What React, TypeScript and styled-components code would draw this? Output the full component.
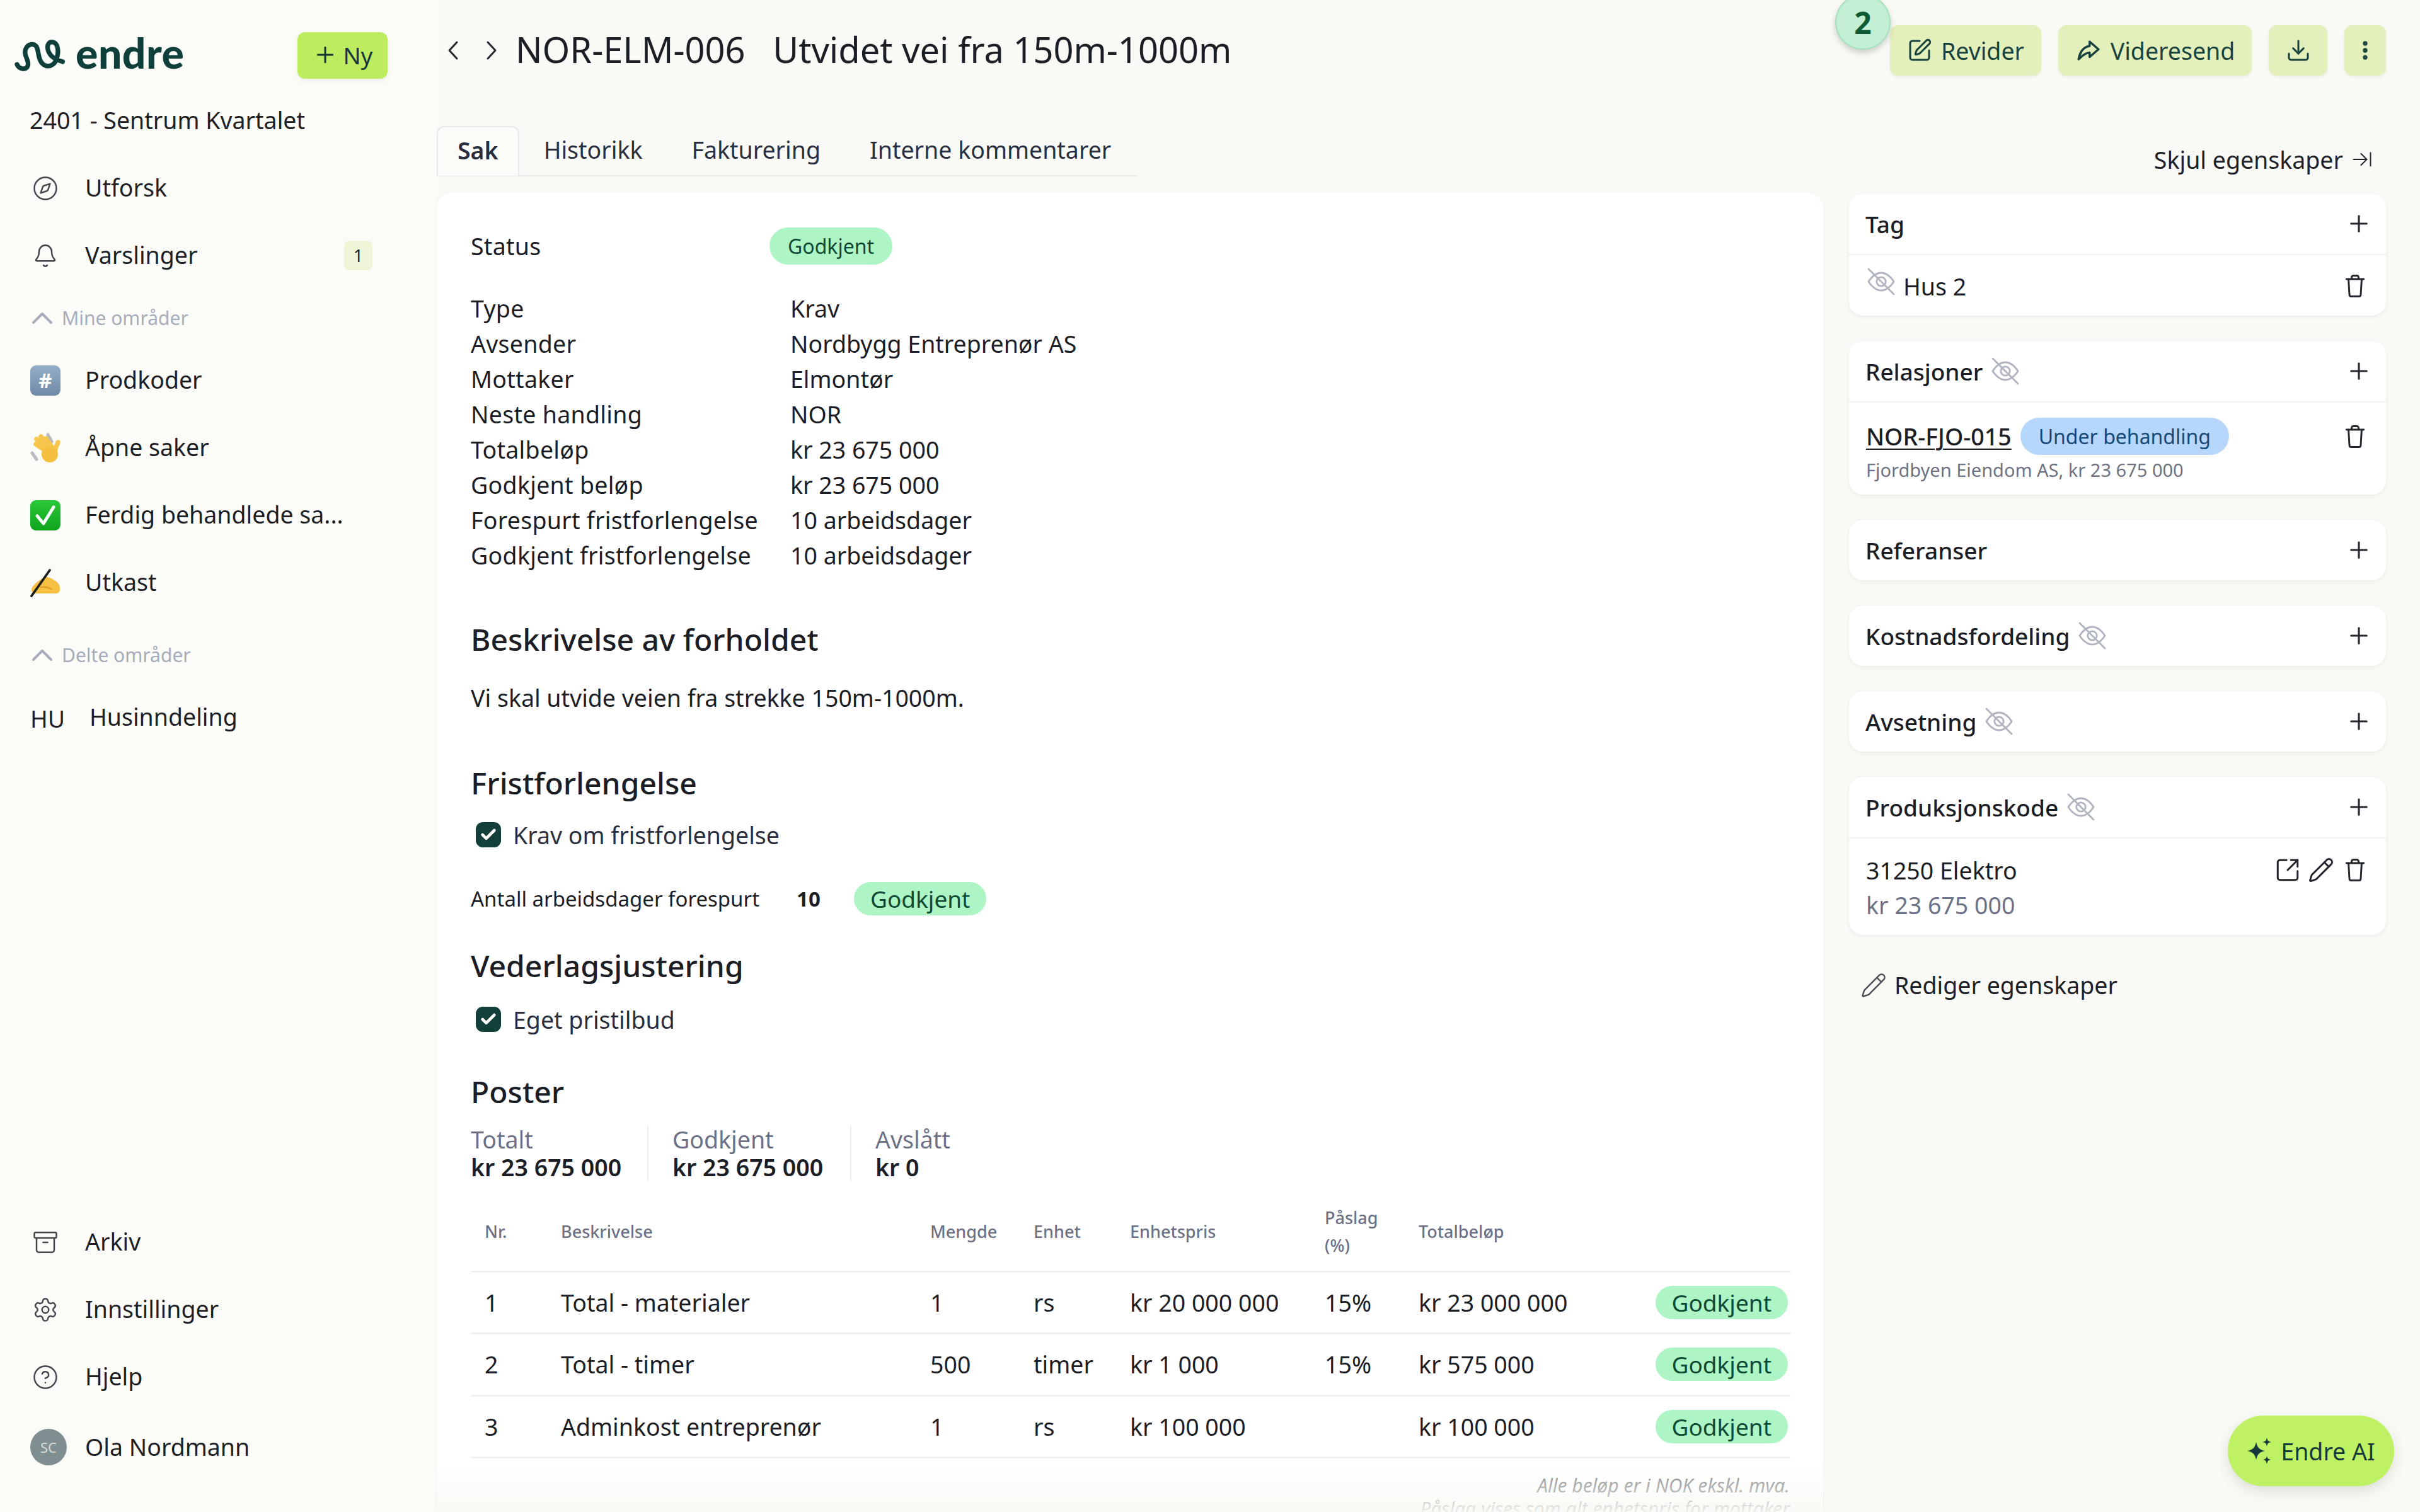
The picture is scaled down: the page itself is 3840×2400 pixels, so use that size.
import React from "react";
import styled, { createGlobalStyle } from "styled-components";
import {
  Compass, Bell, Plus, SquarePen, Download, EllipsisVertical, ArrowRightToLine,
  Archive, Settings, CircleHelp, SquareArrowOutUpRight, Pencil, Check,
} from "lucide-react";
import { TbShare3 } from "react-icons/tb";

const Global = createGlobalStyle`
  html, body { margin: 0; padding: 0; background: #f9faf5; }
  body { font-family: "Noto Sans", "Open Sans", sans-serif; color: #1c1e26; }
  * { box-sizing: border-box; }
`;

const Page = styled.div`
  position: relative;
  width: 3840px;
  height: 2400px;
  overflow: hidden;
  display: grid;
  grid-template-columns: 693px 1fr;
  background: #f9faf5;
  font-size: 37.5px;
`;

/* ---------- Sidebar ---------- */
const Sidebar = styled.aside`
  display: flex;
  flex-direction: column;
  padding: 51px 0 45px;
  background: #fbfcf8;
  height: 2400px;
`;
const BrandRow = styled.div`
  display: flex;
  align-items: center;
  justify-content: space-between;
  padding: 0 78px 0 22px;
  height: 74px;
`;
const Brand = styled.div`
  display: flex;
  align-items: center;
  gap: 14px;
  color: #0f3f3b;
`;
const BrandName = styled.span`
  font-family: "Lato", "Inter", sans-serif;
  font-weight: 900;
  font-size: 66px;
  line-height: 74px;
  letter-spacing: 0.5px;
  margin-top: -8px;
  color: #0f3f3b;
`;
const NewButton = styled.button`
  display: flex;
  align-items: center;
  justify-content: center;
  gap: 9px;
  width: 143px;
  height: 74px;
  padding-bottom: 3px;
  border: 0;
  border-radius: 12px;
  background: #bdec5f;
  color: #17383a;
  font: 400 37px "Noto Sans", sans-serif;
  box-shadow: 0 3px 6px rgba(40, 60, 30, 0.08);
`;
const Project = styled.div`
  margin: 28px 0 16px;
  height: 76px;
  line-height: 76px;
  padding-left: 47px;
  color: #1f2125;
`;
const NavRow = styled.div`
  display: flex;
  align-items: center;
  height: ${(p) => p.$h || 107}px;
  padding-left: 48px;
  padding-right: 102px;
  color: #1d1f25;
`;
const NavIcon = styled.span`
  display: flex;
  justify-content: center;
  align-items: center;
  width: 48px;
  height: 48px;
  margin-right: 39px;
  color: #43474c;
  flex: none;
`;
const NavLabel = styled.span`
  flex: 1;
  white-space: nowrap;
  overflow: hidden;
  text-overflow: ellipsis;
  padding-bottom: 2px;
`;
const Count = styled.span`
  display: flex;
  align-items: center;
  justify-content: center;
  width: 45px;
  height: 47px;
  border-radius: 8px;
  background: #eef5d6;
  font-size: 27px;
`;
const SectionLabel = styled.div`
  display: flex;
  align-items: center;
  gap: 14px;
  height: ${(p) => p.$h}px;
  padding: ${(p) => p.$top || 0}px 0 0 50px;
  font-size: 30px;
  color: #a7acba;
`;
const AreaCode = styled.span`
  width: 94px;
  flex: none;
  font-size: 37.5px;
  padding-top: 4px;
`;
const Spacer = styled.div`
  flex: 1;
`;
const Avatar = styled.span`
  display: flex;
  align-items: center;
  justify-content: center;
  width: 58px;
  height: 58px;
  border-radius: 50%;
  margin-right: 29px;
  background: #7f8e90;
  color: #d6dcdc;
  font-size: 22px;
  flex: none;
`;
const Keycap = styled.span`
  display: flex;
  align-items: center;
  justify-content: center;
  width: 48px;
  height: 48px;
  border-radius: 9px;
  background: linear-gradient(#94aec9, #6f8aa6);
  color: #fff;
  font-weight: 700;
  font-size: 33px;
  line-height: 1;
`;

/* ---------- Main ---------- */
const Main = styled.main`
  display: flex;
  flex-direction: column;
  padding-right: 54px;
  min-width: 0;
`;
const Header = styled.header`
  display: flex;
  align-items: center;
  justify-content: space-between;
  height: 80px;
  margin-top: 40px;
`;
const TitleGroup = styled.div`
  display: flex;
  align-items: center;
  padding-left: 16px;
`;
const NavArrow = styled.span`
  display: flex;
  width: ${(p) => p.$w}px;
  color: #26282e;
`;
const Title = styled.h1`
  margin: 0 0 4px;
  font-weight: 400;
  font-size: 56px;
  line-height: 76px;
  color: #1c1e26;
  white-space: pre;
`;
const Actions = styled.div`
  display: flex;
  gap: 27px;
`;
const ActionButton = styled.button`
  position: relative;
  display: flex;
  align-items: center;
  justify-content: center;
  gap: 14px;
  height: 80px;
  width: ${(p) => p.$w}px;
  border: 0;
  border-radius: 13px;
  background: #e4f0bb;
  color: #17423e;
  font: 400 37.5px "Noto Sans", sans-serif;
  box-shadow: 0 2px 5px rgba(40, 60, 30, 0.07);
`;
const StepBadge = styled.span`
  position: absolute;
  left: -87px;
  top: -49px;
  display: flex;
  align-items: center;
  justify-content: center;
  width: 88px;
  height: 88px;
  border-radius: 50%;
  border: 2px solid #a5e0bc;
  background: #c4efd5;
  color: #0d5a34;
  font-weight: 700;
  font-size: 48px;
  box-shadow: 0 5px 10px rgba(30, 60, 40, 0.22);
`;
const TabBar = styled.div`
  display: flex;
  justify-content: space-between;
  margin-top: 80px;
  height: 80px;
`;
const Tabs = styled.div`
  display: flex;
  width: 1112px;
  box-shadow: inset 0 -2px 0 #e4e6ea;
`;
const Tab = styled.div`
  display: flex;
  flex: none;
  align-items: center;
  white-space: nowrap;
  height: 79px;
  padding: 0 ${(p) => (p.$active ? 31 : 39)}px 4px;
  color: #2a2f3f;
  font-weight: ${(p) => (p.$active ? 600 : 400)};
  background: ${(p) => (p.$active ? "#fbfcf8" : "transparent")};
  border: ${(p) => (p.$active ? "2px solid #e6e8ea" : "0")};
  border-bottom: 0;
  border-radius: 12px 12px 0 0;
`;
const HideLink = styled.div`
  display: flex;
  align-items: center;
  gap: 12px;
  width: 852px;
  justify-content: flex-end;
  padding: 26px 20px 0 0;
  color: #1f2128;
`;
const Body = styled.div`
  display: flex;
  gap: 41px;
  margin-top: 26px;
  flex: 1;
  min-height: 0;
`;
const CaseCard = styled.section`
  position: relative;
  width: 2200px;
  height: 2200px;
  padding: 55px 53px 0 54px;
  background: #fff;
  border-radius: 24px 24px 0 0;
  box-shadow: 0 1px 5px rgba(30, 40, 20, 0.04);
`;
const BottomFade = styled.div`
  position: absolute;
  left: 0;
  right: 0;
  top: 2010px;
  height: 86px;
  background: linear-gradient(rgba(249, 250, 245, 0), rgba(249, 250, 245, 0.93));
`;
const StatusRow = styled.div`
  display: grid;
  grid-template-columns: 474px auto;
  align-items: center;
  justify-content: start;
  height: 59px;
`;
const StatusLabel = styled.span`
  letter-spacing: 0.28px;
  margin-top: -1px;
`;
const Pill = styled.span`
  display: inline-flex;
  align-items: center;
  justify-content: center;
  height: ${(p) => p.$h || 53}px;
  padding: 0 ${(p) => p.$px || 26}px;
  border-radius: 30px;
  background: ${(p) => p.$bg || "#aef5c6"};
  color: ${(p) => p.$fg || "#0f4a34"};
  font-size: ${(p) => p.$fs || 37}px;
  white-space: nowrap;
`;
const Info = styled.dl`
  display: grid;
  grid-template-columns: 507px 1fr;
  grid-auto-rows: 56px;
  margin: 41px 0 0;
  align-items: center;
`;
const Term = styled.dt`
  margin: 0;
  letter-spacing: 0.28px;
  white-space: nowrap;
`;
const Desc = styled.dd`
  margin: 0;
`;
const Heading = styled.h2`
  margin: ${(p) => p.$mt}px 0 0;
  font-size: 48px;
  line-height: 64px;
  font-weight: 500;
  color: #1c1e26;
`;
const Paragraph = styled.p`
  margin: 33px 0 0;
  line-height: 56px;
`;
const CheckRow = styled.div`
  display: flex;
  align-items: center;
  gap: 19px;
  margin: ${(p) => p.$mt}px 0 0 8px;
  height: 40px;
  color: #2a2f3f;
`;
const CheckBox = styled.span`
  display: flex;
  align-items: center;
  justify-content: center;
  width: 40px;
  height: 40px;
  border-radius: 11px;
  background: #123f3a;
  color: #fff;
`;
const DaysRow = styled.div`
  display: flex;
  align-items: center;
  margin-top: 55px;
  height: 53px;
  font-size: 33px;
`;
const DaysLabel = styled.span`
  width: 517px;
  white-space: nowrap;
`;
const DaysValue = styled.strong`
  width: 91px;
  font-weight: 700;
`;
const Stats = styled.div`
  display: flex;
  margin-top: 22px;
`;
const Stat = styled.div`
  width: ${(p) => p.$w}px;
  margin-right: 42px;
  padding-left: ${(p) => (p.$first ? 0 : 38)}px;
  border-left: ${(p) => (p.$first ? "0" : "2px solid #eceef0")};
  white-space: nowrap;
`;
const StatLabel = styled.div`
  line-height: 44px;
  color: #6c7186;
`;
const StatValue = styled.div`
  line-height: 44px;
  font-weight: 600;
`;
const Table = styled.table`
  width: 2094px;
  margin-top: 18px;
  border-collapse: collapse;
  table-layout: fixed;
`;
const Th = styled.th`
  height: 125px;
  padding: 0 0 0 22px;
  border-bottom: 3px solid #f0f1f1;
  text-align: left;
  font-size: 27px;
  line-height: 44px;
  font-weight: 500;
  color: #6c7186;
`;
const Td = styled.td`
  height: 98.5px;
  padding: 0 0 0 22px;
  border-bottom: 3px solid #f0f1f1;
  white-space: nowrap;
`;
const PillCell = styled(Td)`
  padding: 0 4px 0 0;
  text-align: right;
`;
const Notes = styled.div`
  margin-top: 24px;
  text-align: right;
  font-style: italic;
  font-size: 30px;
  line-height: 37px;
  color: #6f7278;
`;

/* ---------- Properties ---------- */
const Side = styled.aside`
  display: flex;
  flex-direction: column;
  gap: 40px;
  width: 852px;
  padding-top: 1px;
`;
const PropCard = styled.section`
  border-radius: 22px;
  background: #fff;
  box-shadow: 0 2px 6px rgba(30, 40, 20, 0.07);
`;
const PropHeader = styled.div`
  display: flex;
  align-items: center;
  gap: 12px;
  height: 96px;
  padding: 0 22px 0 26px;
  font-weight: 500;
  font-size: 37px;
`;
const PropBody = styled.div`
  border-top: 2px solid #f0f1f0;
  padding: 0 27px;
  height: ${(p) => p.$h}px;
`;
const PropLine = styled.div`
  display: flex;
  align-items: center;
  gap: ${(p) => p.$gap || 0}px;
  height: ${(p) => p.$h}px;
  padding-top: ${(p) => p.$top || 0}px;
`;
const Grow = styled.span`
  flex: 1;
`;
const PlusButton = styled.span`
  display: flex;
  margin-left: auto;
  color: #25282e;
`;
const PropLink = styled.span`
  text-decoration: underline;
  text-underline-offset: 5px;
  text-decoration-thickness: 2px;
  font-weight: 500;
`;
const SubText = styled.div`
  font-size: 29px;
  line-height: 40px;
  color: #6e7280;
  margin-top: 4px;
`;
const Amount = styled.div`
  line-height: 56px;
  color: #6c7186;
`;
const RowIcons = styled.span`
  display: flex;
  align-items: center;
  gap: 11px;
  color: #23262c;
  padding-right: 0;
`;
const EditLink = styled.div`
  display: flex;
  align-items: center;
  gap: 12px;
  margin-top: 14px;
  padding-left: 18px;
  color: #1f2128;
`;
const AiButton = styled.button`
  position: absolute;
  right: 41px;
  bottom: 41px;
  display: flex;
  align-items: center;
  justify-content: center;
  gap: 12px;
  width: 264px;
  height: 112px;
  border: 0;
  border-radius: 56px;
  background: #bef264;
  color: #15383a;
  font: 400 37.5px "Noto Sans", sans-serif;
  box-shadow: 0 8px 20px rgba(40, 60, 30, 0.14);
`;
const EyeWrap = styled.svg`
  color: #b0b4c0;
  flex: none;
`;
const HusEye = styled.span`
  display: flex;
  margin: -14px 11px 0 0;
`;

/* ---------- Drawings ---------- */
const Logo = () => (
  <svg width="84" height="56" viewBox="30 28 252 168" fill="none" stroke="currentColor" strokeWidth="22" strokeLinecap="round" strokeLinejoin="round">
    <path d="M45 155C55 178 90 185 97 160C104 135 75 112 85 85C95 55 130 50 140 75C150 100 145 145 180 160C205 170 230 150 236 120C244 90 240 50 212 48C185 48 185 85 205 110C220 130 245 135 262 142" />
  </svg>
);
const Eye = ({ size = 48 }: { size?: number }) => (
  <EyeWrap width={size} height={size} viewBox="0 0 24 24" fill="none" stroke="currentColor" strokeWidth="1.4">
    <path d="M2 12s4-7 10-7 10 7 10 7-4 7-10 7-10-7-10-7z" />
    <circle cx="12" cy="12" r="3.6" />
    <path d="M2 2l20 20" strokeLinecap="round" />
  </EyeWrap>
);
const Trash = () => (
  <svg width="44" height="46" viewBox="0 0 24 24" fill="none" stroke="currentColor" strokeWidth="1.6" strokeLinecap="round" strokeLinejoin="round">
    <path d="M4.5 6h15M9 6V4.5A1.5 1.5 0 0 1 10.5 3h3A1.5 1.5 0 0 1 15 4.5V6M6.3 6l.8 13.6A1.5 1.5 0 0 0 8.6 21h6.8a1.5 1.5 0 0 0 1.5-1.4L17.7 6" />
  </svg>
);
const ChevronTiny = () => (
  <svg width="34" height="22" viewBox="0 0 34 22" fill="none" stroke="#a7acba" strokeWidth="4" strokeLinecap="round" strokeLinejoin="round">
    <path d="M3 18L17 4l14 14" />
  </svg>
);
const ArrowLeft = () => (
  <svg width="20" height="32" viewBox="0 0 20 32" fill="none" stroke="currentColor" strokeWidth="3" strokeLinecap="round" strokeLinejoin="round">
    <path d="M16 3L4 16l12 13" />
  </svg>
);
const ArrowRight = () => (
  <svg width="20" height="32" viewBox="0 0 20 32" fill="none" stroke="currentColor" strokeWidth="3" strokeLinecap="round" strokeLinejoin="round">
    <path d="M4 3l12 13L4 29" />
  </svg>
);
const Wave = () => (
  <svg width="48" height="50" viewBox="0 0 48 50" fill="none" strokeLinecap="round">
    <path d="M28 4l6 11M3 33l7 10" stroke="#b7bbbf" strokeWidth="5" />
    <path d="M29 32L9 19M30 28L10 11M33 26L17 7M36 26L25 10M38 32l6-16" stroke="#f7c54c" strokeWidth="7.5" />
    <ellipse cx="31" cy="35" rx="13" ry="13" fill="#f5bf40" />
  </svg>
);
const CheckEmoji = () => (
  <svg width="48" height="48" viewBox="0 0 48 48">
    <defs>
      <linearGradient id="greenBox" x1="0" y1="0" x2="0" y2="1">
        <stop offset="0" stopColor="#2bc83a" />
        <stop offset="1" stopColor="#0fa31d" />
      </linearGradient>
    </defs>
    <rect width="48" height="48" rx="9" fill="url(#greenBox)" />
    <path d="M11 25l10 12L37 11" fill="none" stroke="#fff" strokeWidth="5" strokeLinecap="round" strokeLinejoin="round" />
  </svg>
);
const WritingHand = () => (
  <svg width="48" height="46" viewBox="0 0 48 46" fill="none">
    <path d="M3 30C9 22 18 17 24 13C29 15 33 15 38 19C44 22 48 27 47 34C47 39 43 40 39 40L9 40C2 40 1 35 3 30Z" fill="#f6c042" />
    <path d="M2 44L31 3" stroke="#1d1d1f" strokeWidth="3.8" strokeLinecap="round" />
    <path d="M16 30c6-1 12 0 18 3" stroke="#e09f2a" strokeWidth="2" strokeLinecap="round" />
  </svg>
);
const Sparkles = () => (
  <svg width="42" height="48" viewBox="0 0 42 48" fill="currentColor">
    <path d="M15 10C17 19 20 22 29 24 20 26 17 29 15 38 13 29 10 26 1 24 10 22 13 19 15 10Z" />
    <path d="M32 3C33 8 34 9 39 10 34 11 33 12 32 17 31 12 30 11 25 10 30 9 31 8 32 3Z" />
    <path d="M32 32C33 36 34 37 38 38 34 39 33 40 32 45 31 40 30 39 26 38 30 37 31 36 32 32Z" />
  </svg>
);

const info: [string, string][] = [
  ["Type", "Krav"],
  ["Avsender", "Nordbygg Entreprenør AS"],
  ["Mottaker", "Elmontør"],
  ["Neste handling", "NOR"],
  ["Totalbeløp", "kr 23 675 000"],
  ["Godkjent beløp", "kr 23 675 000"],
  ["Forespurt fristforlengelse", "10 arbeidsdager"],
  ["Godkjent fristforlengelse", "10 arbeidsdager"],
];
const rows = [
  ["1", "Total - materialer", "1", "rs", "kr 20 000 000", "15%", "kr 23 000 000"],
  ["2", "Total - timer", "500", "timer", "kr 1 000", "15%", "kr 575 000"],
  ["3", "Adminkost entreprenør", "1", "rs", "kr 100 000", "", "kr 100 000"],
];
const colWidths = [121, 586, 164, 153, 309, 149, 392, 220];

export default function App() {
  return (
    <Page>
      <Global />
      <Sidebar>
        <BrandRow>
          <Brand>
            <Logo />
            <BrandName>endre</BrandName>
          </Brand>
          <NewButton><Plus size={40} strokeWidth={1.8} />Ny</NewButton>
        </BrandRow>
        <Project>2401 - Sentrum Kvartalet</Project>
        <NavRow><NavIcon><Compass size={42} strokeWidth={1.4} /></NavIcon><NavLabel>Utforsk</NavLabel></NavRow>
        <NavRow><NavIcon><Bell size={40} strokeWidth={1.5} /></NavIcon><NavLabel>Varslinger</NavLabel><Count>1</Count></NavRow>
        <SectionLabel $h={91}><ChevronTiny />Mine områder</SectionLabel>
        <NavRow><NavIcon><Keycap>#</Keycap></NavIcon><NavLabel>Prodkoder</NavLabel></NavRow>
        <NavRow><NavIcon><Wave /></NavIcon><NavLabel>Åpne saker</NavLabel></NavRow>
        <NavRow><NavIcon><CheckEmoji /></NavIcon><NavLabel>Ferdig behandlede sa...</NavLabel></NavRow>
        <NavRow><NavIcon><WritingHand /></NavIcon><NavLabel>Utkast</NavLabel></NavRow>
        <SectionLabel $h={107} $top={16}><ChevronTiny />Delte områder</SectionLabel>
        <NavRow><AreaCode>HU</AreaCode><NavLabel>Husinndeling</NavLabel></NavRow>
        <Spacer />
        <NavRow><NavIcon><Archive size={42} strokeWidth={1.4} /></NavIcon><NavLabel>Arkiv</NavLabel></NavRow>
        <NavRow><NavIcon><Settings size={42} strokeWidth={1.4} /></NavIcon><NavLabel>Innstillinger</NavLabel></NavRow>
        <NavRow><NavIcon><CircleHelp size={42} strokeWidth={1.4} /></NavIcon><NavLabel>Hjelp</NavLabel></NavRow>
        <NavRow $h={116}><Avatar>SC</Avatar><NavLabel>Ola Nordmann</NavLabel></NavRow>
      </Sidebar>

      <Main>
        <Header>
          <TitleGroup>
            <NavArrow $w={61}><ArrowLeft /></NavArrow>
            <NavArrow $w={48}><ArrowRight /></NavArrow>
            <Title>NOR-ELM-006   Utvidet vei fra 150m-1000m</Title>
          </TitleGroup>
          <Actions>
            <ActionButton $w={240}>
              <StepBadge>2</StepBadge>
              <SquarePen size={40} strokeWidth={1.8} />Revider
            </ActionButton>
            <ActionButton $w={307}><TbShare3 size={42} />Videresend</ActionButton>
            <ActionButton $w={93}><Download size={40} strokeWidth={1.8} /></ActionButton>
            <ActionButton $w={66}><EllipsisVertical size={38} strokeWidth={2.6} /></ActionButton>
          </Actions>
        </Header>

        <TabBar>
          <Tabs>
            <Tab $active>Sak</Tab>
            <Tab>Historikk</Tab>
            <Tab>Fakturering</Tab>
            <Tab>Interne kommentarer</Tab>
          </Tabs>
          <HideLink>Skjul egenskaper<ArrowRightToLine size={36} strokeWidth={1.3} /></HideLink>
        </TabBar>

        <Body>
          <CaseCard>
            <StatusRow>
              <StatusLabel>Status</StatusLabel>
              <Pill $h={59} $px={29} $fs={32}>Godkjent</Pill>
            </StatusRow>
            <Info>
              {info.map(([k, v]) => (
                <React.Fragment key={k}>
                  <Term>{k}</Term>
                  <Desc>{v}</Desc>
                </React.Fragment>
              ))}
            </Info>
            <Heading $mt={74}>Beskrivelse av forholdet</Heading>
            <Paragraph>Vi skal utvide veien fra strekke 150m-1000m.</Paragraph>
            <Heading $mt={75}>Fristforlengelse</Heading>
            <CheckRow $mt={30}><CheckBox><Check size={28} strokeWidth={4} /></CheckBox>Krav om fristforlengelse</CheckRow>
            <DaysRow>
              <DaysLabel>Antall arbeidsdager forespurt</DaysLabel>
              <DaysValue>10</DaysValue>
              <Pill>Godkjent</Pill>
            </DaysRow>
            <Heading $mt={48}>Vederlagsjustering</Heading>
            <CheckRow $mt={33}><CheckBox><Check size={28} strokeWidth={4} /></CheckBox>Eget pristilbud</CheckRow>
            <Heading $mt={63}>Poster</Heading>
            <Stats>
              <Stat $first $w={238}><StatLabel>Totalt</StatLabel><StatValue>kr 23 675 000</StatValue></Stat>
              <Stat $w={280}><StatLabel>Godkjent</StatLabel><StatValue>kr 23 675 000</StatValue></Stat>
              <Stat $w={200}><StatLabel>Avslått</StatLabel><StatValue>kr 0</StatValue></Stat>
            </Stats>
            <Table>
              <colgroup>
                {colWidths.map((w, i) => <col key={i} width={w} />)}
              </colgroup>
              <thead>
                <tr>
                  <Th>Nr.</Th>
                  <Th>Beskrivelse</Th>
                  <Th>Mengde</Th>
                  <Th>Enhet</Th>
                  <Th>Enhetspris</Th>
                  <Th>Påslag<br />(%)</Th>
                  <Th>Totalbeløp</Th>
                  <Th />
                </tr>
              </thead>
              <tbody>
                {rows.map((r) => (
                  <tr key={r[0]}>
                    {r.map((c, i) => <Td key={i}>{c}</Td>)}
                    <PillCell><Pill>Godkjent</Pill></PillCell>
                  </tr>
                ))}
              </tbody>
            </Table>
            <Notes>
              Alle beløp er i NOK ekskl. mva.<br />
              Påslag vises som alt enhetspris for mottaker
            </Notes>
            <BottomFade />
          </CaseCard>

          <Side>
            <PropCard>
              <PropHeader>Tag<PlusButton><Plus size={42} strokeWidth={1.8} /></PlusButton></PropHeader>
              <PropBody $h={98}>
                <PropLine $h={98}>
                  <HusEye><Eye /></HusEye>
                  Hus 2
                  <Grow />
                  <RowIcons><Trash /></RowIcons>
                </PropLine>
              </PropBody>
            </PropCard>
            <PropCard>
              <PropHeader>Relasjoner<Eye /><PlusButton><Plus size={42} strokeWidth={1.8} /></PlusButton></PropHeader>
              <PropBody $h={148}>
                <PropLine $h={83} $gap={14} $top={24}>
                  <PropLink>NOR-FJO-015</PropLink>
                  <Pill $h={59} $px={29} $fs={32} $bg="#b7d6fb" $fg="#154a78">Under behandling</Pill>
                  <Grow />
                  <RowIcons><Trash /></RowIcons>
                </PropLine>
                <SubText>Fjordbyen Eiendom AS, kr 23 675 000</SubText>
              </PropBody>
            </PropCard>
            <PropCard>
              <PropHeader>Referanser<PlusButton><Plus size={42} strokeWidth={1.8} /></PlusButton></PropHeader>
            </PropCard>
            <PropCard>
              <PropHeader>Kostnadsfordeling<Eye /><PlusButton><Plus size={42} strokeWidth={1.8} /></PlusButton></PropHeader>
            </PropCard>
            <PropCard>
              <PropHeader>Avsetning<Eye /><PlusButton><Plus size={42} strokeWidth={1.8} /></PlusButton></PropHeader>
            </PropCard>
            <PropCard>
              <PropHeader>Produksjonskode<Eye /><PlusButton><Plus size={42} strokeWidth={1.8} /></PlusButton></PropHeader>
              <PropBody $h={155}>
                <PropLine $h={78} $top={22}>
                  31250 Elektro
                  <Grow />
                  <RowIcons>
                    <SquareArrowOutUpRight size={42} strokeWidth={1.7} />
                    <Pencil size={42} strokeWidth={1.7} />
                    <Trash />
                  </RowIcons>
                </PropLine>
                <Amount>kr 23 675 000</Amount>
              </PropBody>
            </PropCard>
            <EditLink><Pencil size={42} strokeWidth={1.4} color="#4a4d54" />Rediger egenskaper</EditLink>
          </Side>
        </Body>
      </Main>

      <AiButton><Sparkles />Endre AI</AiButton>
    </Page>
  );
}
